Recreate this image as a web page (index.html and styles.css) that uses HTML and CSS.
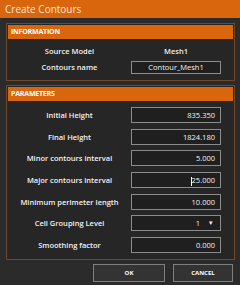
FILE: index.html
```html
<!DOCTYPE html>
<html>
<head>
<meta charset="utf-8">
<link rel="stylesheet" href="styles.css">
</head>
<body>
<div class="dialog">
  <div class="titlebar">Create Contours</div>
  <div class="content">
    <div class="group info">
      <div class="group-header">INFORMATION</div>
      <div class="rows">
        <div class="row"><div class="label">Source Model</div><div class="value">Mesh1</div></div>
        <div class="row"><div class="label">Contours name</div><div class="field center">Contour_Mesh1</div></div>
      </div>
    </div>
    <div class="group params">
      <div class="group-header">PARAMETERS</div>
      <div class="rows prow">
        <div class="row"><div class="label">Initial Height</div><div class="field">835.350</div></div>
        <div class="row"><div class="label">Final Height</div><div class="field">1824.180</div></div>
        <div class="row"><div class="label">Minor contours interval</div><div class="field">5.000</div></div>
        <div class="row"><div class="label">Major contours interval</div><div class="field"><span class="caret"></span>25.000</div></div>
        <div class="row"><div class="label">Minimum perimeter length</div><div class="field">10.000</div></div>
        <div class="row"><div class="label">Cell Grouping Level</div><div class="field select"><span>1</span><span class="arrow">▾</span></div></div>
        <div class="row"><div class="label">Smoothing factor</div><div class="field">0.000</div></div>
      </div>
    </div>
    <div class="buttons">
      <div class="btn ok">OK</div>
      <div class="btn cancel">CANCEL</div>
    </div>
  </div>
</div>
</body>
</html>
```
FILE: styles.css
```css
* { box-sizing: border-box; }
html, body { margin: 0; padding: 0; }
body {
  width: 240px;
  height: 285px;
  background: #2b2b2b;
  font-family: "Open Sans", "Noto Sans", sans-serif;
  color: #f0f0f0;
  overflow: hidden;
}
.dialog { width: 240px; height: 285px; display: flex; flex-direction: column; }
.titlebar {
  height: 18px;
  background: #d9660c;
  font-size: 10px;
  line-height: 18px;
  padding-left: 5px;
  color: #fbe9da;
}
.content { padding: 5px 5px 0 6px; display: flex; flex-direction: column; }
.group {
  border: 1px solid #6e4a2a;
  background: #262626;
  padding: 1px;
}
.params { margin-top: 4px; }
.group-header {
  height: 14px;
  background: #d9660c;
  font-size: 7px;
  font-weight: 700;
  line-height: 14px;
  padding-left: 3px;
  color: #fff;
  letter-spacing: -0.2px;
}
.rows { display: flex; flex-direction: column; padding: 4px 0 4px; gap: 0; }
.row { display: flex; align-items: center; height: 16px; }
.info .row + .row { margin-top: 0; }
.prow { padding-top: 6px; padding-bottom: 5px; gap: 5.7px; }
.label {
  width: 123px;
  text-align: center;
  font-size: 7.5px;
  font-weight: 600;
  color: #f2f2f2;
}
.value {
  width: 90px;
  text-align: center;
  font-size: 7.5px;
  font-weight: 600;
}
.field {
  width: 90px;
  height: 16px;
  border: 1px solid #8c8c8c;
  background: #1f1f1f;
  font-size: 7.5px;
  line-height: 14px;
  text-align: right;
  padding-right: 5px;
  color: #f2f2f2;
}
.info .field { height: 13px; line-height: 11px; }
.field.center { text-align: center; padding-right: 0; }
.caret { display: inline-block; width: 1px; height: 9px; background: #fff; vertical-align: middle; margin-right: 0; }
.select { display: flex; justify-content: flex-end; gap: 9px; padding-right: 7px; }
.arrow { font-size: 7px; }
.buttons { display: flex; justify-content: flex-end; gap: 8px; margin-top: 4px; padding-right: 2px; }
.btn {
  height: 18px;
  border: 1px solid #7e7e7e;
  background: #333333;
  font-size: 6px;
  font-weight: 700;
  line-height: 16px;
  text-align: center;
  color: #fff;
}
.ok { width: 72px; }
.cancel { width: 60px; }
```
